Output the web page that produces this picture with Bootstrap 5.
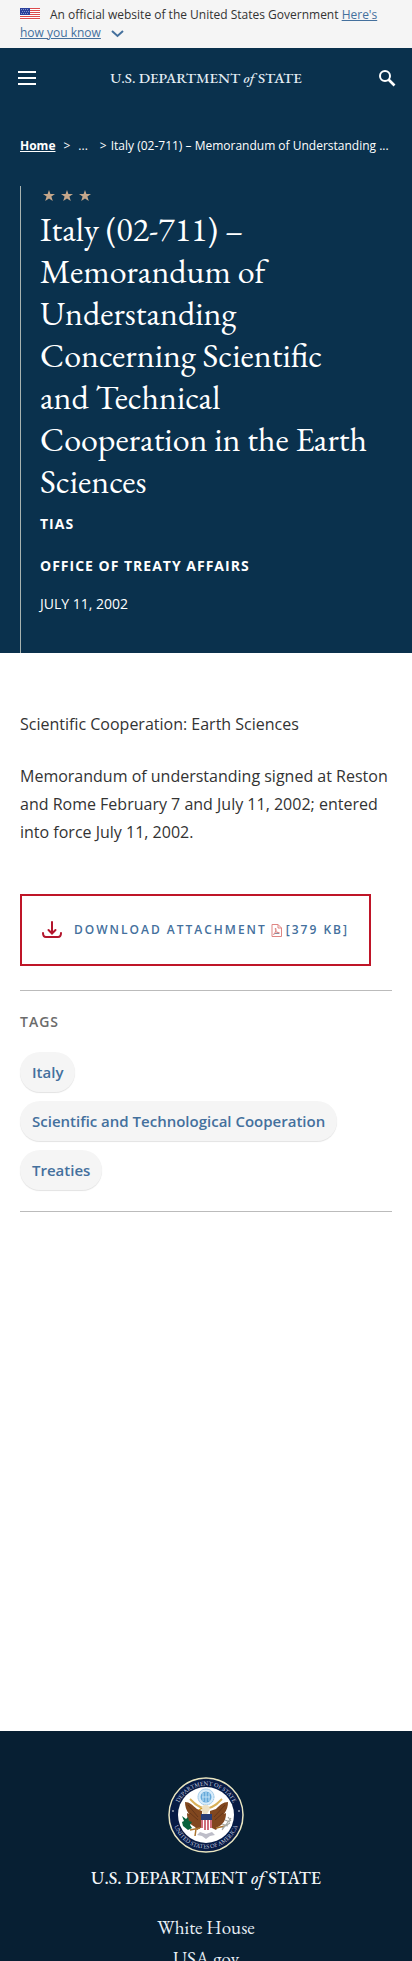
<!DOCTYPE html>
<html lang="en">
<head>
<meta charset="utf-8">
<meta name="viewport" content="width=device-width, initial-scale=1">
<title>Italy (02-711) – United States Department of State</title>
<link href="https://cdn.jsdelivr.net/npm/bootstrap@5.3.0/dist/css/bootstrap.min.css" rel="stylesheet">
<style>
:root { --navy: #0a314d; --footer: #071f33; --blue: #44709d; --gutter: 20px; }
body { font-family: "Open Sans", "Noto Sans", sans-serif; font-size: 16px; line-height: 28px; color: #333; }
.garamond { font-family: "EB Garamond", "Liberation Serif", serif; }
.gutter { padding-left: var(--gutter); padding-right: var(--gutter); }
.gov-banner { background: #f5f5f5; font-size: 12px; line-height: 18px; padding-top: 6px; padding-bottom: 6px; }
.gov-banner a { color: var(--blue); }
.flag { margin-right: 10px; vertical-align: -1px; }
.chevron { margin-left: 10px; }
.site-top { background: var(--navy); }
.site-bar { height: 60px; padding: 0 16px; }
.site-bar .btn { width: 22px; color: #fff; }
.wordmark { font-size: 15px; line-height: 24px; font-weight: 500; color: #e4edf4; }
.trail { font-size: 12px; line-height: 18px; padding-top: 29px; padding-bottom: 31px; }
.trail a { color: #fff; }
.hero { border-left: 1px solid #a9b3b0; margin-left: var(--gutter); margin-right: var(--gutter); padding-left: 19px; padding-right: 20px; padding-bottom: 39px; }
.stars { padding: 4px 2px 0; color: #c5a78b; }
.hero h1 { font-size: 34px; line-height: 42px; margin-bottom: 12px; }
.label-line { font-size: 14px; line-height: 20px; letter-spacing: 1px; }
.office { margin-top: 22px; margin-bottom: 18px; }
.dateline { font-size: 14px; line-height: 20px; }
.article { padding-top: 57px; padding-bottom: 519px; }
.download { border: 2px solid #bf1528; height: 72px; padding: 0 20px; margin-top: 48px; margin-bottom: 24px; font-size: 12px; letter-spacing: 2px; line-height: 20px; color: var(--blue); white-space: nowrap; }
.tag-box { border-top: 1px solid #bbb; border-bottom: 1px solid #bbb; padding-top: 21px; padding-bottom: 21px; }
.tag-box h2 { font-size: 14px; line-height: 20px; letter-spacing: 1px; color: #6b6b6b; margin-bottom: 20px; }
.tag-pill { background: #f5f5f5; color: var(--blue); border-radius: 20px; padding: 10px 12px; font-size: 15px; line-height: 20px; box-shadow: 0 1px 1px #e3e3e3; }
.tag-list { gap: 9px; }
.site-footer { background: var(--footer); padding-top: 46px; }
.site-footer .wordmark { font-size: 18px; line-height: 24px; color: #f2f6f9; margin-top: 13px; margin-bottom: 22px; }
.site-footer a { color: #e6eef5; font-size: 19px; line-height: 31px; }
</style>
</head>
<body class="d-flex flex-column vh-100 overflow-hidden">
<div class="gov-banner gutter">
  <svg class="flag" width="20" height="12" viewBox="0 0 20 12" aria-hidden="true"><path fill="#fff" d="M0 0h20v12H0z"/><path stroke="#dc4a4c" d="M0 .5h20M0 2.5h20M0 4.5h20M0 6.5h20M0 8.5h20M0 10.5h20"/><path fill="#2c419c" d="M0 0h10v7H0z"/><path stroke="#99a8d8" stroke-width=".8" stroke-dasharray="1 1" d="M1 1.5h8M2 3.5h8M1 5.5h8"/></svg>An official website of the United States Government <a href="#">Here's how you know</a><svg class="chevron" width="13" height="8" viewBox="0 0 13 8" fill="none" stroke="#44709d" stroke-width="2" aria-hidden="true"><path d="m1 1 5.500 5L12 1"/></svg>
</div>
<header class="site-top">
  <div class="site-bar d-flex align-items-center justify-content-between">
    <button class="btn p-0 border-0 d-flex" aria-label="Menu"><svg width="22" height="16" viewBox="0 0 22 16" stroke="currentColor" stroke-width="2"><path d="M2 2h18M2 8h18M2 14h18"/></svg></button>
    <a href="#" class="wordmark garamond text-decoration-none">U.S. DEPARTMENT <i>of</i> STATE</a>
    <button class="btn p-0 border-0 d-flex" aria-label="Search"><svg width="22" height="18" viewBox="0 0 22 18" fill="none" stroke="currentColor" stroke-width="2"><circle cx="11" cy="7" r="5"/><path stroke-width="2.600" d="m14.500 10.500 6 6"/></svg></button>
  </div>
  <nav class="trail gutter d-flex text-white" aria-label="Breadcrumb">
    <a href="#" class="fw-bold">Home</a><span class="ms-1 ps-1">&gt;</span><span class="mx-2">...</span><span class="mx-1">&gt;</span><span class="text-nowrap">Italy (02-711) – Memorandum of Understanding ...</span>
  </nav>
  <div class="hero text-white">
    <div class="stars d-flex"><svg width="50" height="18" viewBox="0 0 50 18" fill="currentColor" aria-hidden="true"><defs><path id="st" d="m6 0 1.400 4H12L8.400 6.600 9.800 11 6 8.400 2.200 11l1.400-4.400L0 4h4.600z"/></defs><use href="#st" x="1"/><use href="#st" x="19"/><use href="#st" x="37"/></svg></div>
    <h1 class="garamond fw-normal">Italy (02-711) – Memorandum of Understanding Concerning Scientific and Technical Cooperation in the Earth Sciences</h1>
    <p class="label-line fw-bold mb-0">TIAS</p>
    <p class="label-line office fw-bold">OFFICE OF TREATY AFFAIRS</p>
    <p class="dateline mb-0">JULY 11, 2002</p>
  </div>
</header>
<main class="article gutter">
  <p class="mb-4">Scientific Cooperation: Earth Sciences</p>
  <p class="mb-0">Memorandum of understanding signed at Reston and Rome February 7 and July 11, 2002; entered into force July 11, 2002.</p>
  <a href="#" class="download d-inline-flex align-items-center fw-semibold text-decoration-none">
    <svg class="me-2" width="20" height="18" viewBox="0 0 20 18" fill="none" stroke="#b3152c" stroke-width="2" stroke-linecap="round" aria-hidden="true"><path d="M10 1v11M6.500 9 10 12.500 13.500 9M1 12c0 3 1 4 3 4h12c2 0 3-1 3-4"/></svg>
    <span class="ms-1">DOWNLOAD ATTACHMENT</span>
    <svg class="ms-1 me-1" width="11" height="13" viewBox="0 0 11 13" fill="none" stroke="#df8582" aria-hidden="true"><path d="M1 .5h6l3.500 3.500v8.500H1zM7 .5V4h3.500M2.500 10.500C5 8 5.500 5 4.500 4c-1 2 2 5 4 5-2-1-4 0-6 1.500"/><path stroke="#8d8fa0" d="M4 9.500h4"/></svg>
    <span>[379 KB]</span>
  </a>
  <section class="tag-box">
    <h2 class="fw-semibold">TAGS</h2>
    <div class="tag-list d-flex flex-column align-items-start">
      <a href="#" class="tag-pill fw-semibold text-decoration-none">Italy</a>
      <a href="#" class="tag-pill fw-semibold text-decoration-none">Scientific and Technological Cooperation</a>
      <a href="#" class="tag-pill fw-semibold text-decoration-none">Treaties</a>
    </div>
  </section>
</main>
<footer class="site-footer garamond d-flex flex-column align-items-center flex-grow-1">
  <svg width="76" height="76" viewBox="0 0 76 76" role="img" aria-label="Department of State seal">
    <defs><path id="arcTop" d="M8.500 38a29.500 29.500 0 0 1 59 0"/><path id="arcBottom" d="M4.500 38a33.500 33.500 0 0 0 67 0"/></defs>
    <circle cx="38" cy="38" r="37" fill="#071b45" stroke="#e9e5c0" stroke-width="1.500"/>
    <circle cx="38" cy="38" r="28" fill="#fff"/>
    <g fill="#d5d9e6" font-size="6" text-anchor="middle"><text><textPath href="#arcTop" startOffset="50%">DEPARTMENT OF STATE</textPath></text><text><textPath href="#arcBottom" startOffset="50%">UNITED STATES OF AMERICA</textPath></text></g>
    <circle cx="5" cy="34" r=".8" fill="#fff"/><circle cx="71" cy="34" r=".8" fill="#fff"/>
    <circle cx="38" cy="20" r="8" fill="#d9ecfa" stroke="#8fc0e4" stroke-dasharray="1.500 .6"/><circle cx="38" cy="20" r="5.500" fill="#65a9da"/><path stroke="#c5e2f6" d="M35 16v8M38 15v10M41 16v8M34 20h8"/>
    <path fill="#81471f" d="M17 25c5 0 7 3 12 7l5 2v16l-5 3-2-3c-6-3-8-8-8-14l2 1c-3-4-4-8-4-12zM60 25c-5 0-8 3-12 7l-6 2v16l6 3 2-3c6-3 8-8 8-14l-2 1c3-4 4-8 4-12z"/>
    <path fill="none" stroke="#592f17" stroke-width=".7" d="m20 28 10 12M22 36l8 7M57 28 46 40M55 36l-8 7"/>
    <path fill="none" stroke="#d9b15a" stroke-width="1.800" d="M22 22c5 5 8 8 13 9M54 22c-5 5-8 8-13 9"/>
    <path fill="#eee1c4" d="M33 31c3-5 8-4 9 1l-3 5h-4z"/><path stroke="#d79b21" stroke-width="1.500" d="m34 31-3 2"/>
    <path fill="#fff" d="M33 38h11v13l-5 4-6-4z"/><path stroke="#bc3243" stroke-width="1.400" d="M34 40v11M37 40v13M40 40v13M43 40v11"/><path fill="#293d75" d="M33 37h11v6H33z"/>
    <path fill="#08623d" d="m14 39 4 3 2-2 1 4 3 1-2 3 2 3-4 2-5-4-1-4 2-1z"/><path fill="none" stroke="#ad7630" stroke-width="1.500" d="m22 53 10-2M28 52l-1 7M48 51l9-2"/>
    <path fill="none" stroke="#a4a7a2" stroke-width="1.200" d="m54 53 9-12M54 47l6 2M57 43l5 2M60 40l3 4M54 51l8-5"/>
    <path fill="#bdbdc8" d="m32 55 6 2 6-2 3 3-5 1-4 3-4-3-5-1z"/>
  </svg>
  <a href="#" class="wordmark text-decoration-none">U.S. DEPARTMENT <i>of</i> STATE</a>
  <a href="#" class="text-decoration-none">White House</a>
  <a href="#" class="text-decoration-none">USA.gov</a>
</footer>
<script src="https://cdn.jsdelivr.net/npm/bootstrap@5.3.0/dist/js/bootstrap.bundle.min.js"></script>
</body>
</html>
